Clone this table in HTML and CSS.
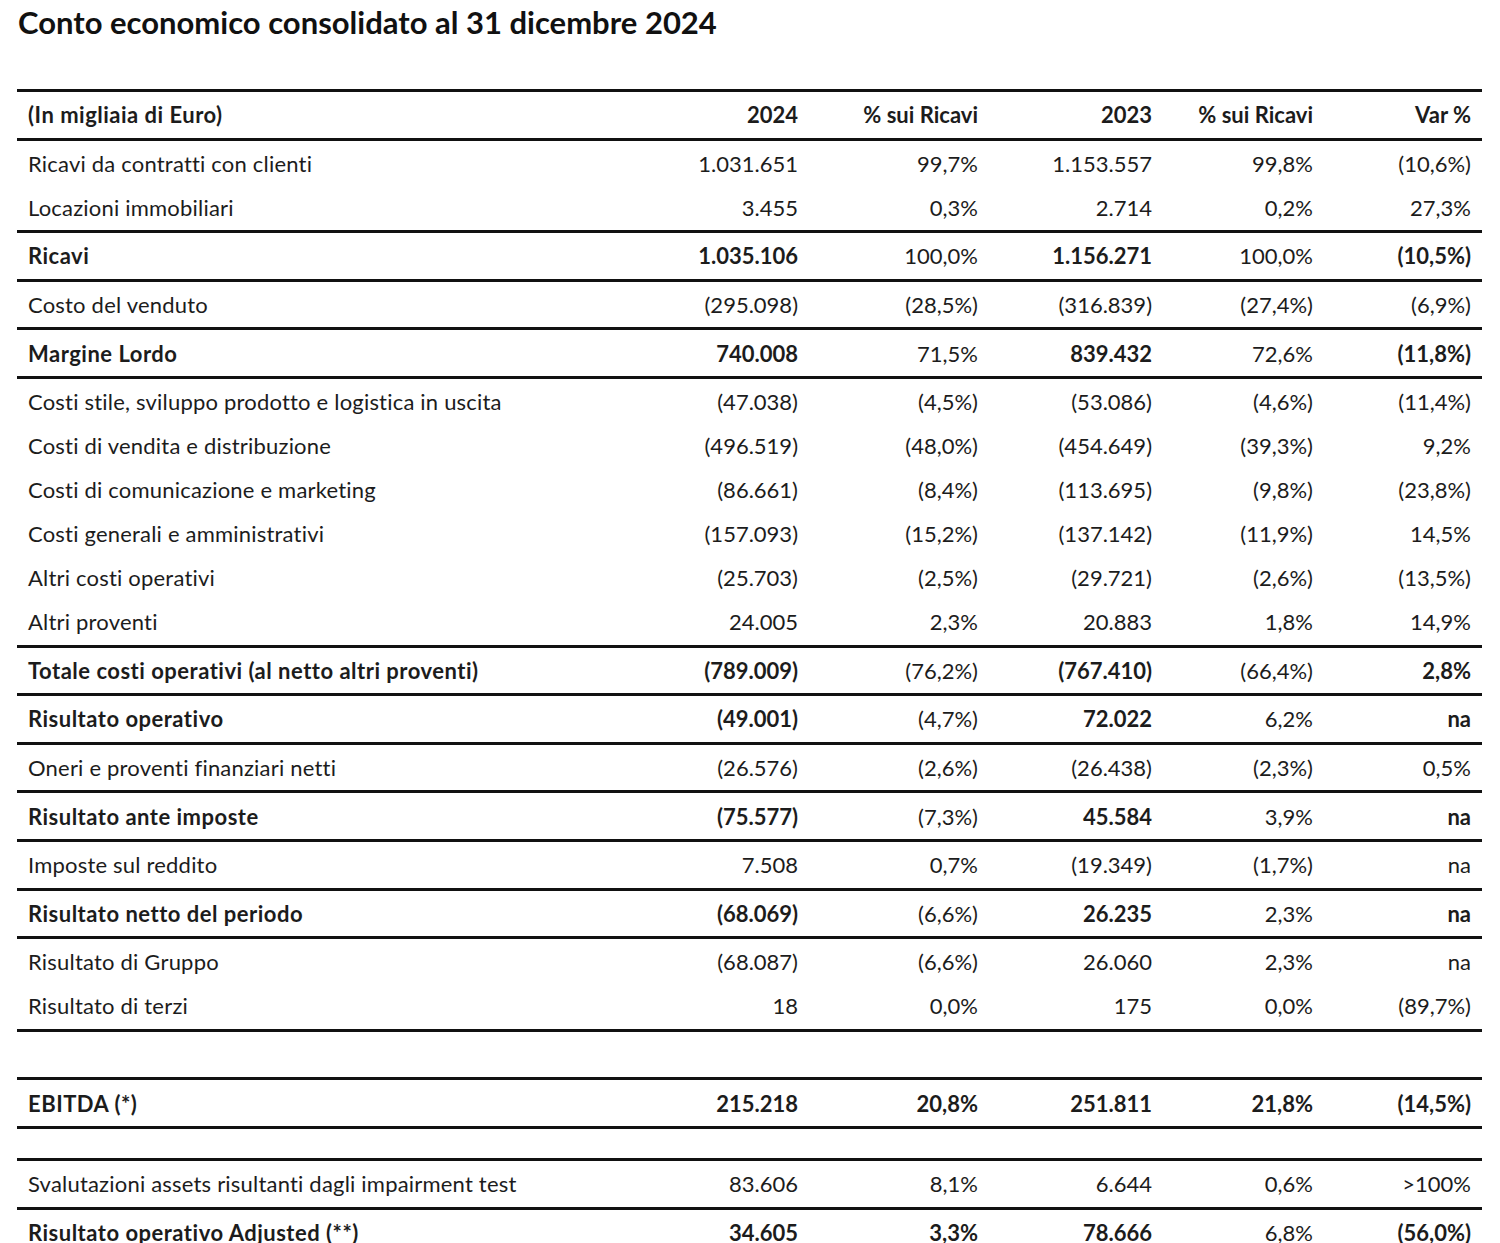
FILE: index.html
```html
<!DOCTYPE html>
<html lang="it">
<head>
<meta charset="utf-8">
<title>Conto economico consolidato al 31 dicembre 2024</title>
<link rel="stylesheet" href="styles.css">
</head>
<body>
<h1 class="title">Conto economico consolidato al 31 dicembre 2024</h1>

<div class="table">
  <div class="group head">
    <div class="row b"><span>(In migliaia di Euro)</span><span>2024</span><span>% sui Ricavi</span><span>2023</span><span>% sui Ricavi</span><span>Var %</span></div>
  </div>
  <div class="group">
    <div class="row"><span>Ricavi da contratti con clienti</span><span>1.031.651</span><span>99,7%</span><span>1.153.557</span><span>99,8%</span><span>(10,6%)</span></div>
    <div class="row"><span>Locazioni immobiliari</span><span>3.455</span><span>0,3%</span><span>2.714</span><span>0,2%</span><span>27,3%</span></div>
  </div>
  <div class="group">
    <div class="row tot"><span>Ricavi</span><span>1.035.106</span><span>100,0%</span><span>1.156.271</span><span>100,0%</span><span>(10,5%)</span></div>
  </div>
  <div class="group">
    <div class="row"><span>Costo del venduto</span><span>(295.098)</span><span>(28,5%)</span><span>(316.839)</span><span>(27,4%)</span><span>(6,9%)</span></div>
  </div>
  <div class="group">
    <div class="row tot"><span>Margine Lordo</span><span>740.008</span><span>71,5%</span><span>839.432</span><span>72,6%</span><span>(11,8%)</span></div>
  </div>
  <div class="group">
    <div class="row"><span>Costi stile, sviluppo prodotto e logistica in uscita</span><span>(47.038)</span><span>(4,5%)</span><span>(53.086)</span><span>(4,6%)</span><span>(11,4%)</span></div>
    <div class="row"><span>Costi di vendita e distribuzione</span><span>(496.519)</span><span>(48,0%)</span><span>(454.649)</span><span>(39,3%)</span><span>9,2%</span></div>
    <div class="row"><span>Costi di comunicazione e marketing</span><span>(86.661)</span><span>(8,4%)</span><span>(113.695)</span><span>(9,8%)</span><span>(23,8%)</span></div>
    <div class="row"><span>Costi generali e amministrativi</span><span>(157.093)</span><span>(15,2%)</span><span>(137.142)</span><span>(11,9%)</span><span>14,5%</span></div>
    <div class="row"><span>Altri costi operativi</span><span>(25.703)</span><span>(2,5%)</span><span>(29.721)</span><span>(2,6%)</span><span>(13,5%)</span></div>
    <div class="row"><span>Altri proventi</span><span>24.005</span><span>2,3%</span><span>20.883</span><span>1,8%</span><span>14,9%</span></div>
  </div>
  <div class="group">
    <div class="row tot"><span>Totale costi operativi (al netto altri proventi)</span><span>(789.009)</span><span>(76,2%)</span><span>(767.410)</span><span>(66,4%)</span><span>2,8%</span></div>
  </div>
  <div class="group">
    <div class="row tot"><span>Risultato operativo</span><span>(49.001)</span><span>(4,7%)</span><span>72.022</span><span>6,2%</span><span>na</span></div>
  </div>
  <div class="group">
    <div class="row"><span>Oneri e proventi finanziari netti</span><span>(26.576)</span><span>(2,6%)</span><span>(26.438)</span><span>(2,3%)</span><span>0,5%</span></div>
  </div>
  <div class="group">
    <div class="row tot"><span>Risultato ante imposte</span><span>(75.577)</span><span>(7,3%)</span><span>45.584</span><span>3,9%</span><span>na</span></div>
  </div>
  <div class="group">
    <div class="row"><span>Imposte sul reddito</span><span>7.508</span><span>0,7%</span><span>(19.349)</span><span>(1,7%)</span><span>na</span></div>
  </div>
  <div class="group">
    <div class="row tot"><span>Risultato netto del periodo</span><span>(68.069)</span><span>(6,6%)</span><span>26.235</span><span>2,3%</span><span>na</span></div>
  </div>
  <div class="group">
    <div class="row"><span>Risultato di Gruppo</span><span>(68.087)</span><span>(6,6%)</span><span>26.060</span><span>2,3%</span><span>na</span></div>
    <div class="row"><span>Risultato di terzi</span><span>18</span><span>0,0%</span><span>175</span><span>0,0%</span><span>(89,7%)</span></div>
  </div>
  <div class="group empty-lg"></div>
  <div class="group">
    <div class="row b"><span>EBITDA (*)</span><span>215.218</span><span>20,8%</span><span>251.811</span><span>21,8%</span><span>(14,5%)</span></div>
  </div>
  <div class="gap"></div>
  <div class="group top">
    <div class="row"><span>Svalutazioni assets risultanti dagli impairment test</span><span>83.606</span><span>8,1%</span><span>6.644</span><span>0,6%</span><span>&gt;100%</span></div>
  </div>
  <div class="group">
    <div class="row adj"><span>Risultato operativo Adjusted (**)</span><span>34.605</span><span>3,3%</span><span>78.666</span><span>6,8%</span><span>(56,0%)</span></div>
  </div>
</div>
</body>
</html>
```

FILE: styles.css
```css
html, body {
  margin: 0;
  padding: 0;
  background: #ffffff;
}

body {
  font-family: Lato, "Noto Sans", sans-serif;
  color: #1c1c1c;
  overflow: hidden;
}

.title {
  margin: 0;
  padding: 4px 0 0 18px;
  height: 38px;
  font-size: 31px;
  font-weight: 700;
  color: #111;
  line-height: 36px;
  letter-spacing: 0;
}

.table {
  margin: 47px 0 0 17px;
  width: 1465px;
  border-top: 3px solid #111;
}

.group {
  border-bottom: 3px solid #111;
  padding: 0.8px 0;
}

.group.top {
  border-top: 3px solid #111;
}

.group.empty-lg {
  height: 44px;
}

.gap {
  height: 29px;
}

.row {
  display: grid;
  grid-template-columns: 603px 189px 180px 174px 161px 158px;
  height: 44px;
  align-items: center;
  font-size: 22px;
}

.row span {
  padding-right: 11px;
  text-align: right;
  white-space: nowrap;
}

.row span:first-child {
  text-align: left;
  padding-left: 11px;
  padding-right: 0;
  letter-spacing: 0.2px;
}

.row.b span {
  font-weight: 700;
}

.row.b span:first-child,
.row.tot span:first-child,
.row.adj span:first-child {
  letter-spacing: 0.5px;
}

.row.tot span:nth-child(1),
.row.tot span:nth-child(2),
.row.tot span:nth-child(4),
.row.tot span:nth-child(6) {
  font-weight: 700;
}

.row.adj span {
  font-weight: 700;
}

.row.adj span:nth-child(5) {
  font-weight: 400;
}
```
